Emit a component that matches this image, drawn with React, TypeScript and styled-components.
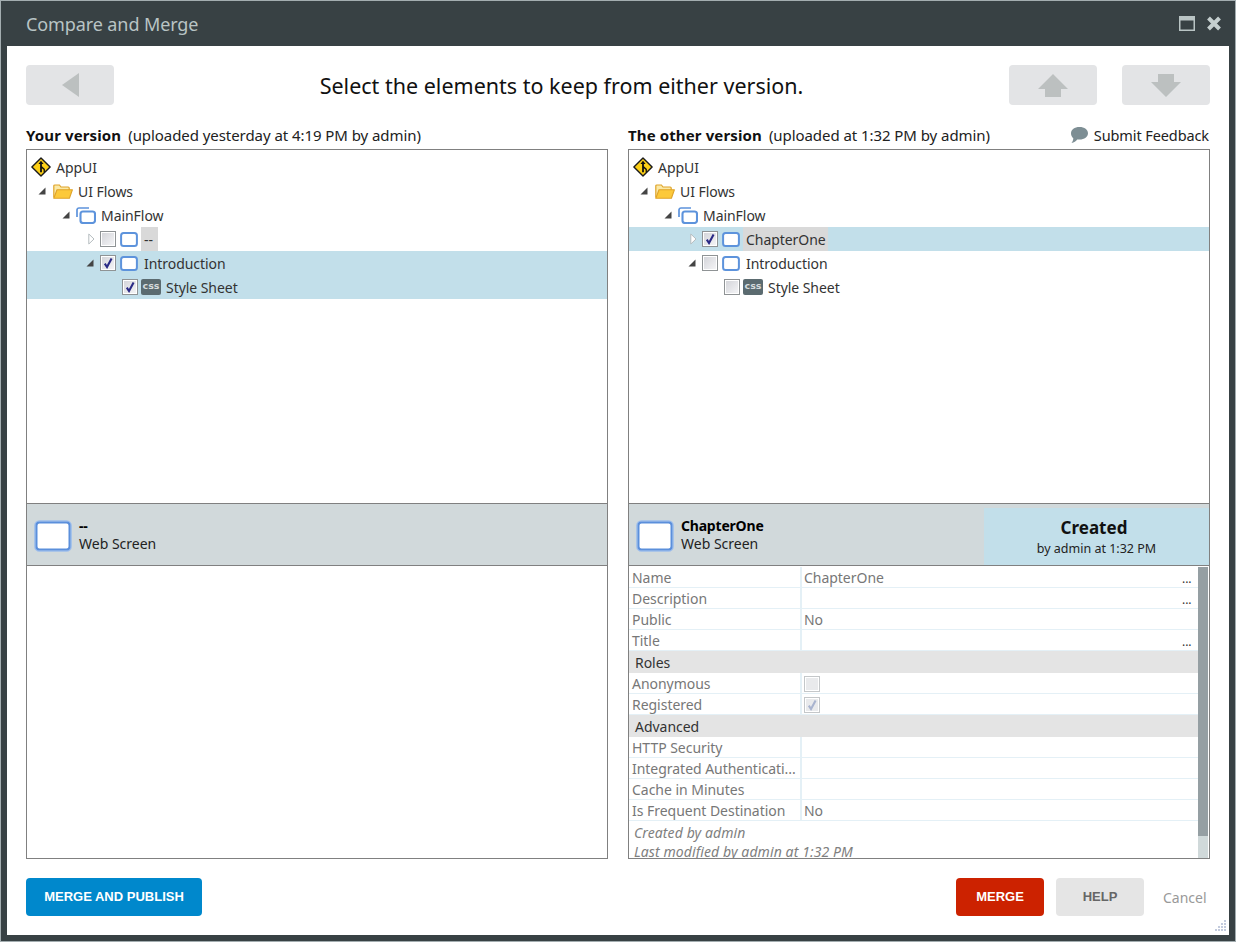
import styled, { createGlobalStyle } from 'styled-components'

const GlobalStyle = createGlobalStyle`
    html, body {
        margin: 0;
        padding: 0;
        background: #fff;
    }
    * {
        box-sizing: border-box;
    }
`;

const Window = styled.div`
    position: relative;
    width: 1236px;
    height: 942px;
    background: #384144;
    border: 1px solid #a3adb0;
    display: flex;
    flex-direction: column;
    font-family: "Noto Sans", "Open Sans", sans-serif;
    font-size: 14px;
    color: #333;
    overflow: hidden;
`;

const TitleBar = styled.div`
    height: 45px;
    flex: none;
    display: flex;
    align-items: center;
    justify-content: space-between;
    padding: 1px 13px 0 25px;
`;

const Title = styled.div`
    font-size: 18px;
    color: #b9c4c4;
    letter-spacing: -0.1px;
`;

const WindowButtons = styled.div`
    display: flex;
    align-items: center;
    gap: 11px;
    margin-top: -1px;
`;

const Content = styled.div`
    flex: 1;
    margin: 0 6px 6px 6px;
    background: #fff;
    padding: 19px 19px 0 19px;
    display: flex;
    flex-direction: column;
    position: relative;
`;

const Toolbar = styled.div`
    display: flex;
    align-items: center;
    height: 40px;
    gap: 25px;
`;

const Heading = styled.div`
    flex: 1;
    text-align: center;
    font-size: 21.5px;
    color: #111;
`;

const NavButton = styled.div`
    width: 88px;
    height: 40px;
    background: #e3e4e6;
    border-radius: 4px;
    display: flex;
    align-items: center;
    justify-content: center;
`;

const Columns = styled.div`
    display: grid;
    grid-template-columns: 582px 582px;
    column-gap: 20px;
    margin-top: 20px;
`;

const Column = styled.div`
    display: flex;
    flex-direction: column;
`;

const LabelRow = styled.div`
    height: 24px;
    padding-bottom: 4px;
    display: flex;
    align-items: center;
    justify-content: space-between;
    color: #222;
    white-space: nowrap;
`;

const VersionLabel = styled.div`
    font-size: 15px;
    letter-spacing: -0.06px;
    b {
        font-weight: 700;
        color: #111;
        letter-spacing: 0.12px;
        margin-right: 7px;
    }
`;

const Feedback = styled.div`
    display: flex;
    align-items: center;
    gap: 5px;
    font-size: 14.5px;
    letter-spacing: -0.1px;
    margin-right: 1px;
`;

const Panel = styled.div`
    height: 710px;
    border: 1px solid #808080;
    display: flex;
    flex-direction: column;
    overflow: hidden;
`;

const Tree = styled.div`
    height: 354px;
    flex: none;
    padding-top: 5px;
    border-bottom: 1px solid #808080;
    letter-spacing: -0.05px;
`;

const TreeRow = styled.div<{ $indent: number; $selected?: boolean }>`
    height: 24px;
    display: flex;
    align-items: center;
    padding-left: ${(p) => p.$indent}px;
    background: ${(p) => (p.$selected ? '#c2dfea' : 'transparent')};
`;

const RowLabel = styled.span<{ $gap: number; $highlight?: boolean }>`
    margin-left: ${(p) => p.$gap}px;
    padding: ${(p) => (p.$highlight ? '0 2px 0 3px' : '0')};
    min-width: ${(p) => (p.$highlight ? '17px' : '0')};
    height: 24px;
    line-height: 26px;
    color: #333;
    background: ${(p) => (p.$highlight ? '#d9d9d9' : 'transparent')};
`;

const Toggle = styled.span`
    display: inline-flex;
    width: 12px;
    flex: none;
`;

const Spacer = styled.span<{ $width: number }>`
    width: ${(p) => p.$width}px;
    flex: none;
`;

const CheckFrame = styled.span<{ $muted?: boolean }>`
    width: 16px;
    height: 16px;
    flex: none;
    display: inline-flex;
    align-items: center;
    justify-content: center;
    border: 1px solid ${(p) => (p.$muted ? '#c4c7c9' : '#8f9395')};
    background: ${(p) => (p.$muted ? '#e9eaec' : 'linear-gradient(135deg, #d2d3d8, #f6f6f8)')};
    box-shadow: inset 0 0 0 1px #fff;
`;

const CssBadge = styled.span`
    width: 20px;
    height: 16px;
    flex: none;
    margin-left: 3px;
    border-radius: 2px;
    background: #5b6b70;
    color: #d5dbdc;
    font-family: "DejaVu Sans", sans-serif;
    font-size: 9.5px;
    font-weight: 700;
    line-height: 14px;
    text-align: center;
    letter-spacing: 0;
`;

const DetailHeader = styled.div`
    height: 62px;
    flex: none;
    background: #d1d9db;
    border-bottom: 1px solid #808080;
    display: flex;
    align-items: center;
    justify-content: space-between;
    padding: 3px 0 0 7px;
`;

const Identity = styled.div`
    display: flex;
    align-items: center;
    gap: 7px;
`;

const IdentityText = styled.div`
    line-height: 18px;
    color: #222;
    margin-top: -2px;
    b {
        display: block;
        color: #000;
        font-weight: 700;
        letter-spacing: -0.2px;
    }
`;

const StatusBox = styled.div`
    width: 225px;
    height: 57px;
    background: #c2dfea;
    text-align: center;
    color: #222;
    font-size: 12.5px;
    line-height: 17px;
    padding-top: 7px;
    b {
        display: block;
        color: #111;
        font-size: 17px;
        line-height: 25px;
        font-weight: 700;
        margin-right: 5px;
    }
`;

const DetailBody = styled.div`
    flex: 1;
    min-height: 0;
    display: flex;
    padding-top: 1px;
`;

const Properties = styled.div`
    flex: 1;
    min-width: 0;
    overflow: hidden;
    letter-spacing: -0.03px;
`;

const PropRow = styled.div`
    height: 21px;
    display: grid;
    grid-template-columns: 173px 1fr 16px;
    grid-template-rows: 20px;
    border-bottom: 1px solid #e4f0f6;
    line-height: 22px;
    color: #777;
`;

const PropName = styled.div`
    padding-left: 3px;
    border-right: 2px solid #e4f0f6;
    white-space: nowrap;
    overflow: hidden;
`;

const PropValue = styled.div`
    padding-left: 2px;
`;

const PropMore = styled.div`
    color: #333;
    font-size: 12px;
    line-height: 24px;
    height: 20px;
`;

const CheckSlot = styled.div`
    display: flex;
    padding-top: 3px;
`;

const Section = styled.div`
    height: 22px;
    background: #e4e4e4;
    padding-left: 6px;
    line-height: 24px;
    color: #333;
`;

const Notes = styled.div`
    padding: 2px 0 0 5px;
    font-style: italic;
    font-size: 14px;
    letter-spacing: 0.1px;
    line-height: 19px;
    color: #808080;
    white-space: nowrap;
`;

const ScrollBar = styled.div`
    width: 10px;
    margin-right: 1px;
    flex: none;
    background: #d0d9da;
`;

const ScrollThumb = styled.div`
    height: 269px;
    background: #959fa3;
`;

const Footer = styled.div`
    display: flex;
    align-items: center;
    margin-top: 19px;
    height: 38px;
`;

const ActionButton = styled.div<{ $bg: string; $color: string; $width: number }>`
    width: ${(p) => p.$width}px;
    height: 38px;
    line-height: 38px;
    text-align: center;
    border-radius: 4px;
    background: ${(p) => p.$bg};
    color: ${(p) => p.$color};
    font-family: "Liberation Sans", Arial, sans-serif;
    font-size: 13px;
    font-weight: 700;
`;

const RightActions = styled.div`
    margin-left: auto;
    display: flex;
    align-items: center;
    gap: 12px;
`;

const Cancel = styled.div`
    color: #999;
    margin-left: 7px;
    width: 47px;
    padding-top: 1px;
`;

const Grip = styled.svg`
    position: absolute;
    right: 2px;
    bottom: 2px;
`;

function ScreenIcon() {
    return (
        <svg width="18" height="15" viewBox="0 0 18 15" style={{ flex: 'none' }}>
            <rect x="1.1" y="1.1" width="15.8" height="12.8" rx="2.5" fill="#fff" stroke="#5d93dc" strokeWidth="2" />
        </svg>
    );
}

function LargeScreenIcon() {
    return (
        <svg width="38" height="32" viewBox="0 0 38 32" style={{ flex: 'none' }}>
            <rect x="1" y="1" width="36" height="30" rx="4.5" fill="#fff" stroke="#9cbdec" strokeWidth="1.6" />
            <rect x="2.5" y="2.5" width="33" height="27" rx="3" fill="#fff" stroke="#5b8fdb" strokeWidth="2" />
        </svg>
    );
}

function FlowIcon() {
    return (
        <svg width="20" height="17" viewBox="0 0 20 17" style={{ flex: 'none' }}>
            <path d="M1 10V3a2 2 0 0 1 2-2h10" fill="none" stroke="#5d93dc" strokeWidth="1.7" />
            <rect x="4.5" y="4.5" width="14.5" height="11.5" rx="2.5" fill="#fff" stroke="#5d93dc" strokeWidth="2.1" />
        </svg>
    );
}

function AppIcon() {
    return (
        <svg width="20" height="20" viewBox="0 0 20 20" style={{ flex: 'none' }}>
            <path d="M10 .9 19.1 10 10 19.1 .9 10Z" fill="#fdd017" stroke="#1a1a1a" strokeWidth="1.4" strokeLinejoin="round" />
            <path d="M10 3.8 7.4 7h1.7v8.2h1.8v-4l1.7 1.5v2.5h1.3v-3.1L10.9 9.2V7h1.7Z" fill="#111" />
        </svg>
    );
}

function FolderIcon() {
    return (
        <svg width="20" height="15" viewBox="0 0 20 15" style={{ flex: 'none' }}>
            <path d="M.8 13.5V2A1 1 0 0 1 1.8 1h4.6l1.6 2h7.2a1 1 0 0 1 1 1v2" fill="#fbe9a6" stroke="#dfa42a" strokeWidth="1.2" />
            <path d="M.8 14.2 4 5.8h15.4l-3 8.4Z" fill="#fcc93a" stroke="#dfa42a" strokeWidth="1.1" strokeLinejoin="round" />
        </svg>
    );
}

function Arrow({ open }: { open: boolean }) {
    return (
        <Toggle>
            {open ? (
                <svg width="8" height="8" viewBox="0 0 8 8">
                    <path d="M7.5.5v7H.5Z" fill="#444" />
                </svg>
            ) : (
                <svg width="7" height="12" viewBox="0 0 7 12">
                    <path d="M.8 1 6 6 .8 11Z" fill="#fff" stroke="#b5bcbf" />
                </svg>
            )}
        </Toggle>
    );
}

function Check({ checked, muted }: { checked?: boolean; muted?: boolean }) {
    return (
        <CheckFrame $muted={muted}>
            {checked && (
                <svg width="12" height="12" viewBox="0 0 12 12">
                    <path d="M2.8 6.6 5 10 9.6 1.4" fill="none" stroke={muted ? '#a9b4cf' : '#2a2a86'} strokeWidth="2.1" />
                </svg>
            )}
        </CheckFrame>
    );
}

type TreeProps = {
    firstChecked: boolean;
    firstLabel: string;
    firstSelected: boolean;
    secondChecked: boolean;
};

function VersionTree({ firstChecked, firstLabel, firstSelected, secondChecked }: TreeProps) {
    return (
        <Tree>
            <TreeRow $indent={4}>
                <AppIcon />
                <RowLabel $gap={5}>AppUI</RowLabel>
            </TreeRow>
            <TreeRow $indent={11}>
                <Arrow open />
                <Spacer $width={3} />
                <FolderIcon />
                <RowLabel $gap={5}>UI Flows</RowLabel>
            </TreeRow>
            <TreeRow $indent={35}>
                <Arrow open />
                <Spacer $width={2} />
                <FlowIcon />
                <RowLabel $gap={5}>MainFlow</RowLabel>
            </TreeRow>
            <TreeRow $indent={61} $selected={firstSelected}>
                <Arrow open={false} />
                <Check checked={firstChecked} />
                <Spacer $width={4} />
                <ScreenIcon />
                <RowLabel $gap={3} $highlight>{firstLabel}</RowLabel>
            </TreeRow>
            <TreeRow $indent={59} $selected={secondChecked}>
                <Arrow open />
                <Spacer $width={2} />
                <Check checked={secondChecked} />
                <Spacer $width={4} />
                <ScreenIcon />
                <RowLabel $gap={6}>Introduction</RowLabel>
            </TreeRow>
            <TreeRow $indent={95} $selected={secondChecked}>
                <Check checked={secondChecked} />
                <CssBadge>css</CssBadge>
                <RowLabel $gap={5}>Style Sheet</RowLabel>
            </TreeRow>
        </Tree>
    );
}

function Prop({ name, value, more }: { name: string; value?: React.ReactNode; more?: boolean }) {
    return (
        <PropRow>
            <PropName>{name}</PropName>
            <PropValue>{value}</PropValue>
            <PropMore>{more ? '...' : ''}</PropMore>
        </PropRow>
    );
}

function App() {
    return (
        <>
            <GlobalStyle />
            <Window>
                <TitleBar>
                    <Title>Compare and Merge</Title>
                    <WindowButtons>
                        <svg width="16" height="15" viewBox="0 0 16 15">
                            <rect x=".75" y=".75" width="14.5" height="13.5" fill="none" stroke="#b9c4c4" strokeWidth="1.5" />
                            <rect x="1" y="1" width="14" height="3.5" fill="#b9c4c4" />
                        </svg>
                        <svg width="16" height="15" viewBox="0 0 16 15">
                            <path d="M2.5 2 13.5 13M13.5 2 2.5 13" stroke="#c5cfcf" strokeWidth="4" />
                        </svg>
                    </WindowButtons>
                </TitleBar>
                <Content>
                    <Toolbar>
                        <NavButton>
                            <svg width="17" height="24" viewBox="0 0 17 24">
                                <path d="M17 0v24L0 12Z" fill="#bcc0c0" />
                            </svg>
                        </NavButton>
                        <Heading>Select the elements to keep from either version.</Heading>
                        <NavButton>
                            <svg width="30" height="23" viewBox="0 0 30 23">
                                <path d="M15 0 30 15H23V23H7V15H0Z" fill="#bcc0c0" />
                            </svg>
                        </NavButton>
                        <NavButton>
                            <svg width="30" height="23" viewBox="0 0 30 23">
                                <path d="M15 23 30 8H23V0H7V8H0Z" fill="#bcc0c0" />
                            </svg>
                        </NavButton>
                    </Toolbar>
                    <Columns>
                        <Column>
                            <LabelRow>
                                <VersionLabel><b>Your version</b>(uploaded yesterday at 4:19 PM by admin)</VersionLabel>
                            </LabelRow>
                            <Panel>
                                <VersionTree firstChecked={false} firstLabel="--" firstSelected={false} secondChecked />
                                <DetailHeader>
                                    <Identity>
                                        <LargeScreenIcon />
                                        <IdentityText><b>--</b>Web Screen</IdentityText>
                                    </Identity>
                                </DetailHeader>
                            </Panel>
                        </Column>
                        <Column>
                            <LabelRow>
                                <VersionLabel><b>The other version</b>(uploaded at 1:32 PM by admin)</VersionLabel>
                                <Feedback>
                                    <svg width="19" height="18" viewBox="0 0 19 18">
                                        <path d="M9.5 1C14.5 1 18 3.7 18 7.3s-3.5 6.3-8.5 6.3c-.8 0-1.6-.1-2.3-.2C6 15 4 16.6 1.5 17c1-1.2 1.7-2.6 1.8-4.8C1.8 11 1 9.3 1 7.3 1 3.7 4.5 1 9.5 1Z" fill="#7d8e94" />
                                    </svg>
                                    Submit Feedback
                                </Feedback>
                            </LabelRow>
                            <Panel>
                                <VersionTree firstChecked firstLabel="ChapterOne" firstSelected secondChecked={false} />
                                <DetailHeader>
                                    <Identity>
                                        <LargeScreenIcon />
                                        <IdentityText><b>ChapterOne</b>Web Screen</IdentityText>
                                    </Identity>
                                    <StatusBox><b>Created</b>by admin at 1:32 PM</StatusBox>
                                </DetailHeader>
                                <DetailBody>
                                    <Properties>
                                        <Prop name="Name" value="ChapterOne" more />
                                        <Prop name="Description" more />
                                        <Prop name="Public" value="No" />
                                        <Prop name="Title" more />
                                        <Section>Roles</Section>
                                        <Prop name="Anonymous" value={<CheckSlot><Check muted /></CheckSlot>} />
                                        <Prop name="Registered" value={<CheckSlot><Check muted checked /></CheckSlot>} />
                                        <Section>Advanced</Section>
                                        <Prop name="HTTP Security" />
                                        <Prop name="Integrated Authenticati..." />
                                        <Prop name="Cache in Minutes" />
                                        <Prop name="Is Frequent Destination" value="No" />
                                        <Notes>
                                            Created by admin<br />
                                            Last modified by admin at 1:32 PM
                                        </Notes>
                                    </Properties>
                                    <ScrollBar>
                                        <ScrollThumb />
                                    </ScrollBar>
                                </DetailBody>
                            </Panel>
                        </Column>
                    </Columns>
                    <Footer>
                        <ActionButton $bg="#0088cc" $color="#fff" $width={176}>MERGE AND PUBLISH</ActionButton>
                        <RightActions>
                            <ActionButton $bg="#cc2200" $color="#fff" $width={88}>MERGE</ActionButton>
                            <ActionButton $bg="#e5e5e5" $color="#666" $width={88}>HELP</ActionButton>
                            <Cancel>Cancel</Cancel>
                        </RightActions>
                    </Footer>
                    <Grip width="14" height="14" viewBox="0 0 14 14">
                        <g fill="#c3cbdd">
                            <rect x="11" y="1" width="2" height="2" />
                            <rect x="11" y="4" width="2" height="2" />
                            <rect x="8" y="4" width="2" height="2" />
                            <rect x="11" y="7" width="2" height="2" />
                            <rect x="8" y="7" width="2" height="2" />
                            <rect x="5" y="7" width="2" height="2" />
                            <rect x="11" y="10" width="2" height="2" />
                            <rect x="8" y="10" width="2" height="2" />
                            <rect x="5" y="10" width="2" height="2" />
                            <rect x="2" y="10" width="2" height="2" />
                        </g>
                    </Grip>
                </Content>
            </Window>
        </>
    )
}

export default App
